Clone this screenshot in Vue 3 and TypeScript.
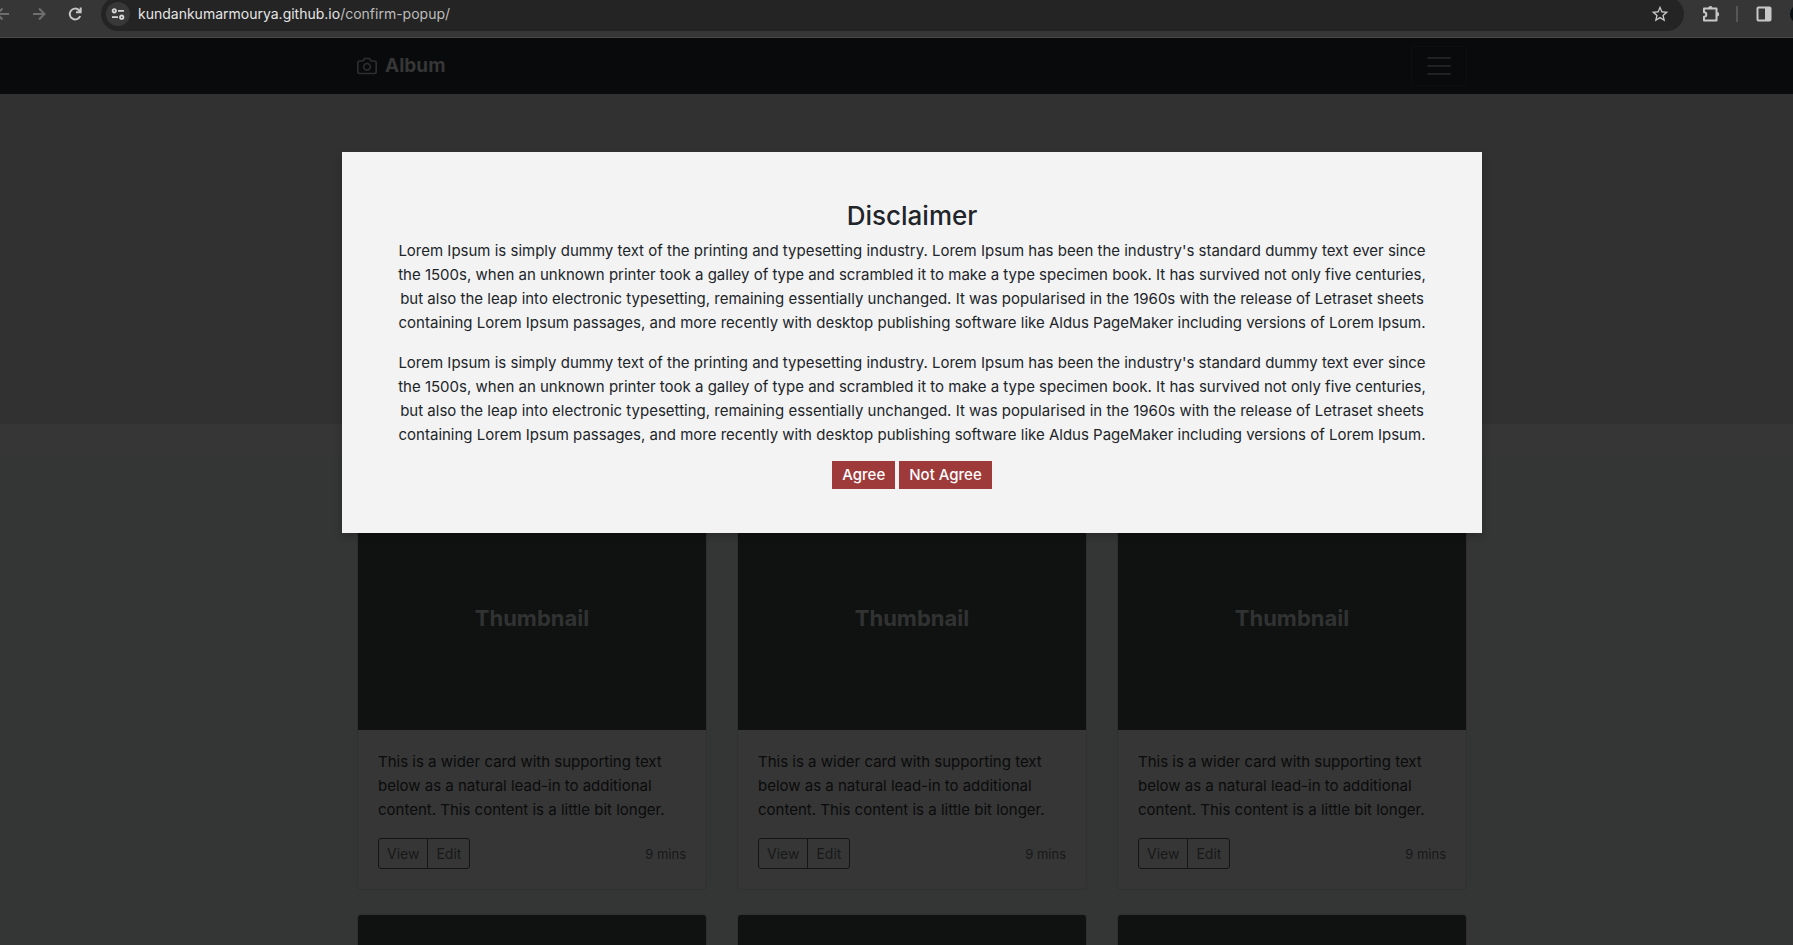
<script setup lang="ts">
interface Card {
  id: number
  text: string
}

const paragraph =
  "Lorem Ipsum is simply dummy text of the printing and typesetting industry. Lorem Ipsum has been the industry's standard dummy text ever since the 1500s, when an unknown printer took a galley of type and scrambled it to make a type specimen book. It has survived not only five centuries, but also the leap into electronic typesetting, remaining essentially unchanged. It was popularised in the 1960s with the release of Letraset sheets containing Lorem Ipsum passages, and more recently with desktop publishing software like Aldus PageMaker including versions of Lorem Ipsum."
const paragraphs: string[] = [paragraph, paragraph]
const cardText =
  'This is a wider card with supporting text below as a natural lead-in to additional content. This content is a little bit longer.'
const cards: Card[] = [1, 2, 3].map((id) => ({ id, text: cardText }))
const pending: number[] = [4, 5, 6]
</script>

<template>
  <div class="window">
    <header class="toolbar">
      <button class="tool back" aria-label="Back">
        <svg width="16" height="16" viewBox="0 0 16 16" fill="none" stroke="#6e6e6e" stroke-width="2"><path d="M15 8H3M8.500 2.500 3 8l5.500 5.500" /></svg>
      </button>
      <button class="tool forward" aria-label="Forward">
        <svg width="16" height="16" viewBox="0 0 16 16" fill="none" stroke="#6e6e6e" stroke-width="2"><path d="M2 8h11M8 2.500 13.500 8 8 13.500" /></svg>
      </button>
      <button class="tool reload" aria-label="Reload">
        <svg width="16" height="16" viewBox="0 0 16 16" fill="none" stroke="#c7c7c7" stroke-width="2"><path d="M13.200 10A5.400 5.400 0 1 1 12 4.200L13.500 6M13.700 1.500V6.200H9" /></svg>
      </button>
      <div class="address">
        <button class="site" aria-label="Site information">
          <svg width="14" height="14" viewBox="0 0 14 14" fill="none" stroke="#d6d6d6" stroke-width="1.800"><circle cx="3.300" cy="3.800" r="1.700" /><path d="M7 3.800h6M1 10.200h6" /><circle cx="10.700" cy="10.200" r="1.700" /></svg>
        </button>
        <span class="url">kundankumarmourya.github.io<span class="path">/confirm-popup/</span></span>
        <button class="tool" aria-label="Bookmark">
          <svg width="20" height="20" viewBox="0 0 24 24" fill="#c7c7c7"><path d="M22 9.240l-7.190-.620L12 2 9.190 8.630 2 9.240l5.460 4.730L5.820 21 12 17.270 18.180 21l-1.630-7.030L22 9.240zM12 15.400l-3.760 2.270 1-4.280-3.320-2.880 4.380-.380L12 6.100l1.710 4.040 4.380.380-3.320 2.880 1 4.280L12 15.400z" /></svg>
        </button>
      </div>
      <button class="tool puzzle" aria-label="Extensions">
        <svg width="18" height="18" viewBox="0 0 18 18"><path d="M2 3.500H14.500V15.500H2V11.800a2.300 2.300 0 0 0 0-4.600z" fill="none" stroke="#c7c7c7" stroke-width="2" stroke-linejoin="round" /><path d="M6.300 3a2.100 2.100 0 0 1 4.200 0zM15 7a2.200 2.200 0 0 1 0 4.400z" fill="#c7c7c7" /></svg>
      </button>
      <span class="divider"></span>
      <button class="tool panel" aria-label="Side panel">
        <svg width="16" height="16" viewBox="0 0 16 16"><rect x="1.500" y="1.500" width="13" height="13" rx="1" fill="none" stroke="#c7c7c7" stroke-width="2" /><path d="M9 1h5.500v14H9z" fill="#c7c7c7" /></svg>
      </button>
      <span class="avatar"></span>
    </header>

    <div class="page">
      <nav class="navbar">
        <div class="container">
          <a class="brand" href="#">
            <svg width="20" height="20" viewBox="0 0 24 24" fill="none" stroke="currentColor" stroke-width="2" stroke-linecap="round" stroke-linejoin="round"><path d="M23 19a2 2 0 0 1-2 2H3a2 2 0 0 1-2-2V8a2 2 0 0 1 2-2h4l2-3h6l2 3h4a2 2 0 0 1 2 2z" /><circle cx="12" cy="13" r="4" /></svg>
            <strong>Album</strong>
          </a>
          <button class="toggler" aria-label="Toggle navigation">
            <svg width="30" height="30" viewBox="0 0 30 30" stroke="#202123" stroke-width="2" stroke-linecap="round"><path d="M4 7h22M4 15h22M4 23h22" /></svg>
          </button>
        </div>
      </nav>

      <section class="jumbotron"></section>

      <main class="album">
        <div class="container cards">
          <article v-for="card in cards" :key="card.id" class="card">
            <div class="thumb">Thumbnail</div>
            <div class="body">
              <p>{{ card.text }}</p>
              <div class="foot">
                <div class="group">
                  <button>View</button>
                  <button>Edit</button>
                </div>
                <small>9 mins</small>
              </div>
            </div>
          </article>
          <article v-for="id in pending" :key="id" class="card">
            <div class="thumb"></div>
          </article>
        </div>
      </main>

      <div class="overlay">
        <div class="dialog" role="dialog" aria-labelledby="dialog-title">
          <h2 id="dialog-title">Disclaimer</h2>
          <p v-for="(text, i) in paragraphs" :key="i">{{ text }}</p>
          <div class="actions">
            <button>Agree</button>
            <button>Not Agree</button>
          </div>
        </div>
      </div>
    </div>
  </div>
</template>

<style>
body {
  margin: 0;
}
</style>

<style scoped>
.window,
.window * {
  box-sizing: border-box;
}
.window {
  height: 100vh;
  overflow: hidden;
  display: flex;
  flex-direction: column;
  background: #363636;
  color: #0a0b0b;
  font: 15px/24px Inter, "Liberation Sans", sans-serif;
}
button {
  font: inherit;
  color: inherit;
  margin: 0;
  padding: 0;
  border: 0;
  background: none;
}
svg {
  display: block;
}
.toolbar {
  flex: none;
  height: 38px;
  padding-bottom: 9px;
  display: flex;
  align-items: center;
  overflow: hidden;
  background: #363636;
  border-bottom: 1px solid #484848;
}
.tool {
  flex: none;
}
.back {
  margin-left: -6px;
}
.forward {
  margin-left: 21px;
}
.reload {
  margin: 0 18px 0 20px;
}
.address {
  flex: 1;
  height: 34px;
  margin-right: 18px;
  padding: 0 14px 0 5px;
  display: flex;
  align-items: center;
  border-radius: 17px;
  background: #242424;
}
.site {
  width: 24px;
  height: 24px;
  margin-right: 8px;
  display: grid;
  place-items: center;
  border-radius: 50%;
  background: #383838;
}
.url {
  flex: 1;
  font-size: 14px;
  color: #e6e6e6;
}
.path {
  color: #bdbdbd;
}
.divider {
  width: 2px;
  height: 16px;
  margin: 0 18px 0 16px;
  background: #565656;
}
.avatar {
  flex: none;
  width: 20px;
  height: 20px;
  margin: 0 -17px 0 18px;
  border-radius: 50%;
  background: #081012;
}
.page {
  --shift: 31px;
  position: relative;
  flex: 1;
  min-height: 0;
  overflow: hidden;
}
.container {
  width: 100%;
  max-width: 1140px;
  margin: 0 auto;
  padding: 0 15px;
}
.navbar {
  padding: 8px 0 8px var(--shift);
  background: #090a0c;
}
.navbar .container {
  display: flex;
  align-items: center;
  justify-content: space-between;
}
.brand {
  display: flex;
  align-items: center;
  gap: 8px;
  font-size: 19px;
  line-height: 30px;
  color: #363636;
  text-decoration: none;
}
.brand svg {
  color: #2d2e2e;
}
.toggler {
  width: 56px;
  height: 40px;
  display: grid;
  place-items: center;
  border: 1px solid #0e0f11;
  border-radius: 4px;
}
.jumbotron {
  height: 330px;
  margin-bottom: 32px;
  background: #313131;
}
.album {
  padding: 48px 0 48px var(--shift);
  background: #343635;
}
.cards {
  display: grid;
  grid-template-columns: repeat(3, 1fr);
  gap: 24px 30px;
}
.card {
  border: 1px solid #303030;
  border-radius: 4px;
  background: #363636;
  overflow: hidden;
}
.thumb {
  height: 225px;
  display: grid;
  place-items: center;
  background: #101211;
  color: #313333;
  font-size: 22px;
  font-weight: 700;
}
.body {
  padding: 20px;
}
.body p {
  margin: 0 0 16px;
}
.foot {
  display: flex;
  align-items: center;
  justify-content: space-between;
}
.group {
  display: flex;
  border: 1px solid #131515;
  border-radius: 3px;
}
.group button {
  padding: 4px 8px;
  font-size: 14px;
  line-height: 21px;
  color: #171919;
}
.group button + button {
  border-left: 1px solid #131515;
}
small {
  font-size: 13px;
  color: #171919;
}
.overlay {
  position: absolute;
  inset: 0;
  padding: 114px 0 0 var(--shift);
}
.dialog {
  max-width: 1140px;
  margin: 0 auto;
  padding: 47px 45px 44px;
  background: #f3f3f3;
  color: #212529;
  text-align: center;
  box-shadow: 0 4px 8px rgba(0, 0, 0, 0.2);
}
.dialog h2 {
  margin: 0 0 6px;
  font-size: 26px;
  line-height: 34px;
  font-weight: 500;
}
.dialog p {
  margin: 0 0 16px;
}
.dialog p:last-of-type {
  margin-bottom: 14px;
}
.actions {
  display: flex;
  justify-content: center;
  gap: 4px;
}
.actions button {
  padding: 2px 10px;
  background: #9e3a3a;
  color: #fff;
  font-weight: 500;
}
</style>
